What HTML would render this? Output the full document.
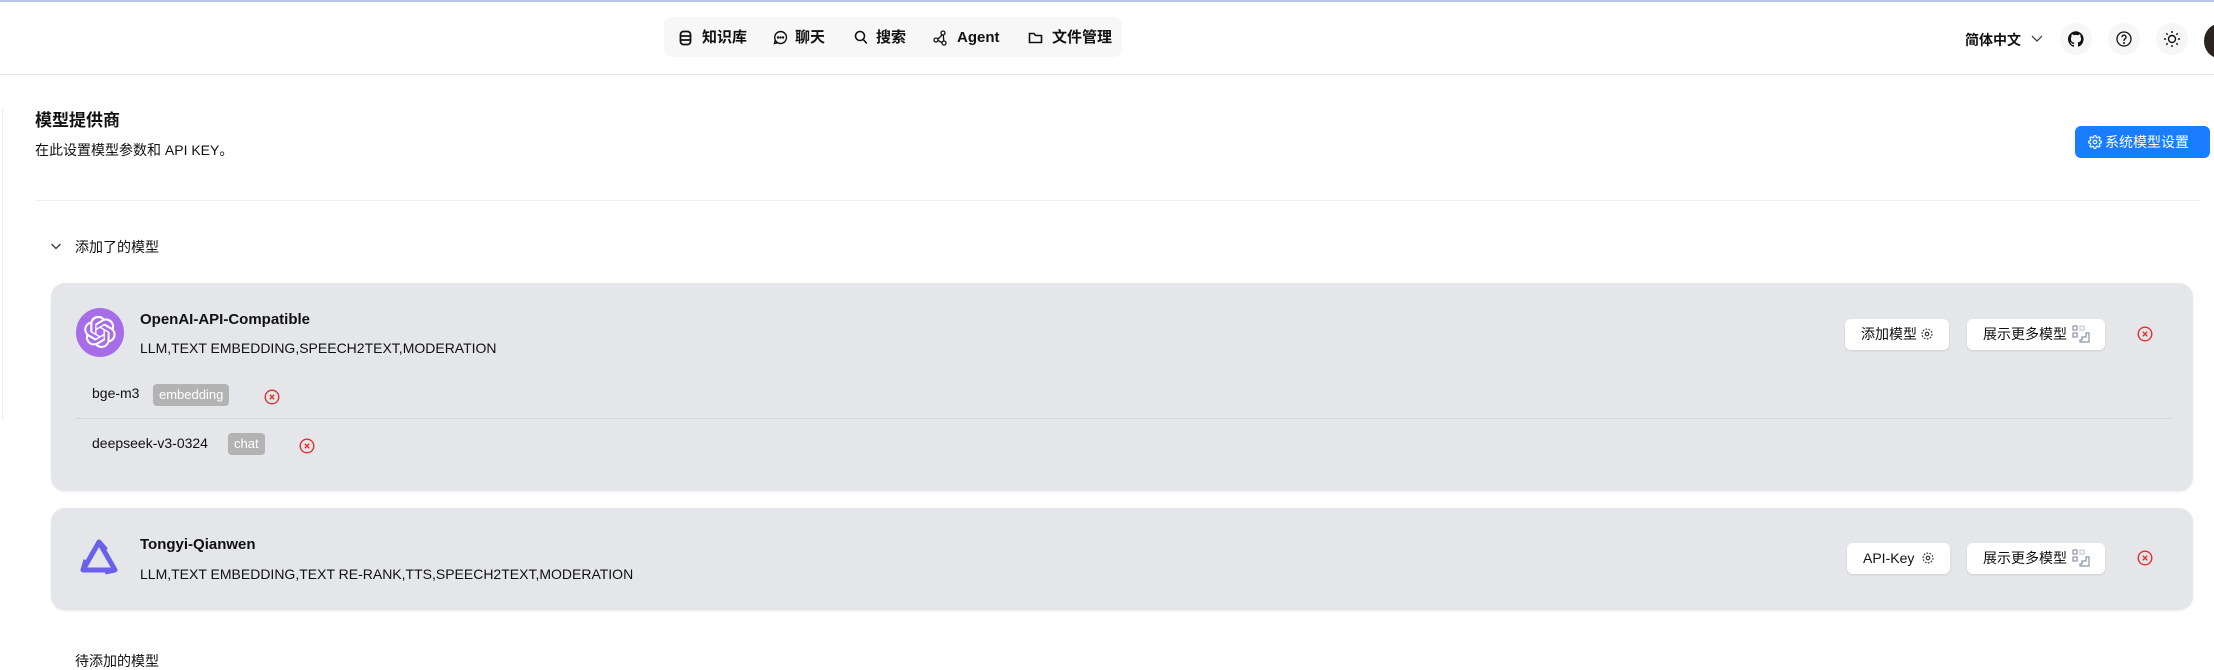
<!DOCTYPE html>
<html><head><meta charset="utf-8"><style>
*{margin:0;padding:0;box-sizing:border-box}
body{width:2214px;height:657px;overflow:hidden;background:#fff;font-family:"Liberation Sans","Noto Sans CJK SC",sans-serif;color:#111;position:relative}
.a{position:absolute}
.topline{left:0;top:0;width:2214px;height:2px;background:#b7c5ea}
.hline{left:0;top:74px;width:2214px;height:1px;background:#e5e5e5}
.pill{left:664px;top:17px;width:458px;height:40px;background:#f7f7f7;border-radius:8px}
.nav{top:28px;font-size:15px;font-weight:bold;line-height:20px}
.navi{top:30px}
.circ{width:32px;height:32px;border-radius:50%;background:#f6f6f6;top:23px}
.card{left:51px;width:2142px;background:#e5e6ea;border-radius:14px;box-shadow:0 1px 2px rgba(0,0,0,.08)}
.btn{background:#fff;border-radius:6px;height:31px;font-size:14px;line-height:31px;box-shadow:0 1px 2px rgba(0,0,0,.1);padding-left:16px}
.tag{background:#b3b3b3;color:#fff;border-radius:4px;font-size:13px;height:22px;line-height:22px;padding:0 6px}
.t14{font-size:14px;line-height:18px}
</style></head><body>
<div class="a topline"></div>
<div class="a hline"></div>
<div class="a pill"></div>
<svg class="a navi" style="left:679px" width="13" height="16" viewBox="0 0 13 16" fill="none" stroke="#111" stroke-width="1.8"><rect x="1.5" y="1.5" width="10" height="13" rx="3"/><path d="M1.5 6h10M1.5 10h10"/></svg>
<div class="a nav" style="left:702px">知识库</div>
<svg class="a navi" style="left:773px" width="15" height="15" viewBox="0 0 15 15" fill="none" stroke="#111" stroke-width="1.4"><path d="M7.5 1.5a6 6 0 1 1-5.3 8.8L1.5 13.5l3.2-.8A6 6 0 0 1 7.5 1.5z"/><circle cx="5" cy="7.5" r=".5" fill="#111"/><circle cx="7.5" cy="7.5" r=".5" fill="#111"/><circle cx="10" cy="7.5" r=".5" fill="#111"/></svg>
<div class="a nav" style="left:795px">聊天</div>
<svg class="a navi" style="left:854px" width="14" height="15" viewBox="0 0 14 15" fill="none" stroke="#111" stroke-width="1.6"><circle cx="6" cy="6" r="4.5"/><path d="M9.3 9.5l3.5 4"/></svg>
<div class="a nav" style="left:876px">搜索</div>
<svg class="a navi" style="left:933px" width="16" height="16" viewBox="0 0 16 16" fill="none" stroke="#111" stroke-width="1.3"><circle cx="10" cy="3" r="2"/><circle cx="3" cy="10" r="2"/><circle cx="11" cy="13" r="2"/><path d="M9 5l-4 4M5 10.5l4 2M10.3 5l.5 6"/></svg>
<div class="a nav" style="left:957px">Agent</div>
<svg class="a navi" style="left:1028px" width="15" height="15" viewBox="0 0 15 15" fill="none" stroke="#111" stroke-width="1.6"><path d="M1.5 3.5v9h12v-7h-6l-1.5-2z"/></svg>
<div class="a nav" style="left:1052px">文件管理</div>

<div class="a" style="left:1965px;top:30px;font-size:14px;font-weight:bold;line-height:20px">简体中文</div>
<svg class="a" style="left:2030px;top:34px" width="14" height="10" viewBox="0 0 14 10" fill="none" stroke="#333" stroke-width="1.2"><path d="M2 2l5 5 5-5"/></svg>
<div class="a circ" style="left:2060px"></div>
<svg class="a" style="left:2068px;top:31px" width="16" height="16" viewBox="0 0 16 16"><path fill="#111" d="M8 .2a8 8 0 0 0-2.5 15.6c.4 0 .5-.2.5-.4v-1.5c-2.2.5-2.7-1-2.7-1-.4-.9-.9-1.2-.9-1.2-.7-.5.1-.5.1-.5.8.1 1.2.8 1.2.8.7 1.3 1.900.9 2.300.7.1-.5.3-.9.5-1.1-1.8-.2-3.6-.9-3.6-4 0-.9.3-1.6.8-2.1-.1-.2-.4-1 .1-2.1 0 0 .7-.2 2.2.8a7.5 7.5 0 0 1 4 0c1.5-1 2.2-.8 2.2-.8.4 1.1.2 1.9.1 2.1.5.6.8 1.3.8 2.1 0 3.1-1.9 3.7-3.6 3.9.3.3.5.8.5 1.5v2.2c0 .2.1.5.6.4A8 8 0 0 0 8 .2z"/></svg>
<div class="a circ" style="left:2108px"></div>
<svg class="a" style="left:2116px;top:31px" width="16" height="16" viewBox="0 0 16 16" fill="none" stroke="#111" stroke-width="1.3"><circle cx="8" cy="8" r="7"/><path d="M6 6.2a2 2 0 1 1 2.8 1.8c-.6.3-.8.7-.8 1.3v.7"/><circle cx="8" cy="12" r=".4" fill="#111"/></svg>
<div class="a circ" style="left:2156px"></div>
<svg class="a" style="left:2163px;top:30px" width="18" height="18" viewBox="0 0 18 18" fill="none" stroke="#111" stroke-width="1.4"><circle cx="9" cy="9" r="3.5"/><path d="M9 1v2M9 15v2M1 9h2M15 9h2M3.3 3.3l1.4 1.4M13.3 13.3l1.4 1.4M3.3 14.7l1.4-1.4M13.3 4.7l1.4-1.4"/></svg>
<div class="a" style="left:2204px;top:24px;width:30px;height:34px;border-radius:50%;background:#2a2320"></div>

<div class="a" style="left:2px;top:108px;width:1px;height:312px;background:#eee"></div>
<div class="a" style="left:35px;top:110px;font-size:17px;font-weight:bold;line-height:22px">模型提供商</div>
<div class="a t14" style="left:35px;top:141px">在此设置模型参数和 API KEY。</div>
<div class="a" style="left:2075px;top:126px;width:135px;height:32px;background:#1a7cff;border-radius:6px;color:#fff;font-size:14px;line-height:32px;padding-left:30px">系统模型设置</div>
<svg class="a" style="left:2088px;top:135px" width="14" height="14" viewBox="0 0 24 24" fill="none" stroke="#fff" stroke-width="2"><circle cx="12" cy="12" r="3"/><path d="M19.4 15a1.7 1.7 0 0 0 .3 1.8l.1.1a2 2 0 1 1-2.8 2.8l-.1-.1a1.7 1.7 0 0 0-2.9 1.2V21a2 2 0 1 1-4 0v-.1a1.7 1.7 0 0 0-2.9-1.2l-.1.1a2 2 0 1 1-2.8-2.8l.1-.1A1.7 1.7 0 0 0 3 14H3a2 2 0 1 1 0-4h.1a1.7 1.7 0 0 0 1.200-2.900l-.1-.1A2 2 0 1 1 7 4.200l.1.1a1.7 1.7 0 0 0 1.900.3H9a1.7 1.7 0 0 0 1-1.500V3a2 2 0 1 1 4 0v.1a1.7 1.7 0 0 0 2.900 1.200l.1-.1a2 2 0 1 1 2.800 2.800l-.1.1a1.7 1.7 0 0 0-.3 1.900V9a1.7 1.7 0 0 0 1.500 1H21a2 2 0 1 1 0 4h-.1a1.7 1.7 0 0 0-1.500 1z"/></svg>
<div class="a" style="left:35px;top:200px;width:2165px;height:1px;background:#eee"></div>
<svg class="a" style="left:50px;top:242px" width="12" height="9" viewBox="0 0 12 9" fill="none" stroke="#333" stroke-width="1.3"><path d="M1.5 2l4.5 4.5 4.5-4.5"/></svg>
<div class="a t14" style="left:75px;top:238px">添加了的模型</div>

<div class="a card" style="top:283px;height:208px"></div>
<div class="a" style="left:76px;top:308px;width:48px;height:49px;border-radius:50%;background:#a76ce8"></div>
<svg class="a" style="left:84px;top:316px" width="32" height="32" viewBox="0 0 24 24" fill="#fff"><path d="M22.3 9.8a6 6 0 0 0-.5-4.9 6 6 0 0 0-6.5-2.9A6 6 0 0 0 4.9 4.2 6 6 0 0 0 1 7.1a6 6 0 0 0 .7 7 6 6 0 0 0 .5 4.9 6 6 0 0 0 6.5 2.9A6 6 0 0 0 13.2 24a6 6 0 0 0 5.7-4.2 6 6 0 0 0 4-2.9 6 6 0 0 0-.7-7zM13.3 22.4a4.5 4.5 0 0 1-2.9-1l.1-.1 4.8-2.8a.8.8 0 0 0 .4-.7v-6.7l2 1.2v5.6a4.5 4.5 0 0 1-4.4 4.5zm-9.7-4.1a4.5 4.5 0 0 1-.5-3l.1.1 4.8 2.8a.8.8 0 0 0 .8 0l5.8-3.4v2.3l-4.8 2.8a4.5 4.5 0 0 1-6.2-1.6zM2.3 7.9a4.5 4.5 0 0 1 2.4-2v5.7a.8.8 0 0 0 .4.7l5.8 3.4-2 1.2-4.8-2.8a4.5 4.5 0 0 1-1.8-6.2zm16.6 3.9-5.8-3.4 2-1.2 4.8 2.8a4.5 4.5 0 0 1-.7 8.1v-5.7a.8.8 0 0 0-.4-.6zm2-3-.1-.1-4.8-2.8a.8.8 0 0 0-.8 0L9.4 9.2V6.9l4.8-2.8a4.5 4.5 0 0 1 6.7 4.7zM8.3 12.9l-2-1.2V6.1a4.5 4.5 0 0 1 7.4-3.5l-.1.1-4.8 2.8a.8.8 0 0 0-.4.7zm1.1-2.4L12 9l2.6 1.5v3L12 15l-2.6-1.5z"/></svg>
<div class="a" style="left:140px;top:310px;font-size:15px;font-weight:bold;line-height:19px">OpenAI-API-Compatible</div>
<div class="a t14" style="left:140px;top:339px">LLM,TEXT EMBEDDING,SPEECH2TEXT,MODERATION</div>
<div class="a btn" style="left:1845px;top:319px;width:104px">添加模型</div>
<svg class="a" style="left:1920px;top:327px" width="14" height="14" viewBox="0 0 24 24" fill="none" stroke="#333" stroke-width="2"><circle cx="12" cy="12" r="3"/><circle cx="12" cy="12" r="8.5" stroke-dasharray="3 2.3"/></svg>
<div class="a btn" style="left:1967px;top:319px;width:138px">展示更多模型</div>
<svg class="a" style="left:2072px;top:325px" width="18" height="18" viewBox="0 0 18 18" fill="none" stroke="#8a94ad" stroke-width="1.2"><rect x="1" y="1" width="4" height="4"/><rect x="1" y="8" width="4" height="4"/><rect x="8" y="1" width="4" height="4" stroke="#c5cbd8"/><path d="M8 17h9V8h-3v4h-4v3H8z"/></svg>
<svg class="a" style="left:2137px;top:326px" width="16" height="16" viewBox="0 0 16 16" fill="none" stroke="#e03030" stroke-width="1.4"><circle cx="8" cy="8" r="6.8"/><path d="M5.8 5.8l4.4 4.4M10.2 5.8l-4.4 4.4"/></svg>

<div class="a t14" style="left:92px;top:384px">bge-m3</div>
<div class="a tag" style="left:153px;top:384px">embedding</div>
<svg class="a" style="left:264px;top:389px" width="16" height="16" viewBox="0 0 16 16" fill="none" stroke="#e03030" stroke-width="1.4"><circle cx="8" cy="8" r="6.8"/><path d="M5.8 5.8l4.4 4.4M10.2 5.8l-4.4 4.4"/></svg>
<div class="a" style="left:76px;top:418px;width:2095px;height:1px;background:#d4d5d9"></div>
<div class="a t14" style="left:92px;top:434px">deepseek-v3-0324</div>
<div class="a tag" style="left:228px;top:433px">chat</div>
<svg class="a" style="left:299px;top:438px" width="16" height="16" viewBox="0 0 16 16" fill="none" stroke="#e03030" stroke-width="1.4"><circle cx="8" cy="8" r="6.8"/><path d="M5.8 5.8l4.4 4.4M10.2 5.8l-4.4 4.4"/></svg>

<div class="a card" style="top:508px;height:102px"></div>
<svg class="a" style="left:79px;top:537px" width="41" height="42" viewBox="0 0 41 42" fill="none" stroke="#6a60ea" stroke-width="5" stroke-linejoin="round"><path d="M20 5L36 33H4z"/><path d="M20 5l7 8M36 33l-10 2M4 33l3-10"/></svg>
<div class="a" style="left:140px;top:535px;font-size:15px;font-weight:bold;line-height:19px">Tongyi-Qianwen</div>
<div class="a t14" style="left:140px;top:565px">LLM,TEXT EMBEDDING,TEXT RE-RANK,TTS,SPEECH2TEXT,MODERATION</div>
<div class="a btn" style="left:1847px;top:543px;width:103px">API-Key</div>
<svg class="a" style="left:1921px;top:551px" width="14" height="14" viewBox="0 0 24 24" fill="none" stroke="#333" stroke-width="2"><circle cx="12" cy="12" r="3"/><circle cx="12" cy="12" r="8.5" stroke-dasharray="3 2.3"/></svg>
<div class="a btn" style="left:1967px;top:543px;width:138px">展示更多模型</div>
<svg class="a" style="left:2072px;top:549px" width="18" height="18" viewBox="0 0 18 18" fill="none" stroke="#8a94ad" stroke-width="1.2"><rect x="1" y="1" width="4" height="4"/><rect x="1" y="8" width="4" height="4"/><rect x="8" y="1" width="4" height="4" stroke="#c5cbd8"/><path d="M8 17h9V8h-3v4h-4v3H8z"/></svg>
<svg class="a" style="left:2137px;top:550px" width="16" height="16" viewBox="0 0 16 16" fill="none" stroke="#e03030" stroke-width="1.4"><circle cx="8" cy="8" r="6.8"/><path d="M5.8 5.8l4.4 4.4M10.2 5.8l-4.4 4.4"/></svg>

<div class="a t14" style="left:75px;top:652px">待添加的模型</div>
</body></html>
